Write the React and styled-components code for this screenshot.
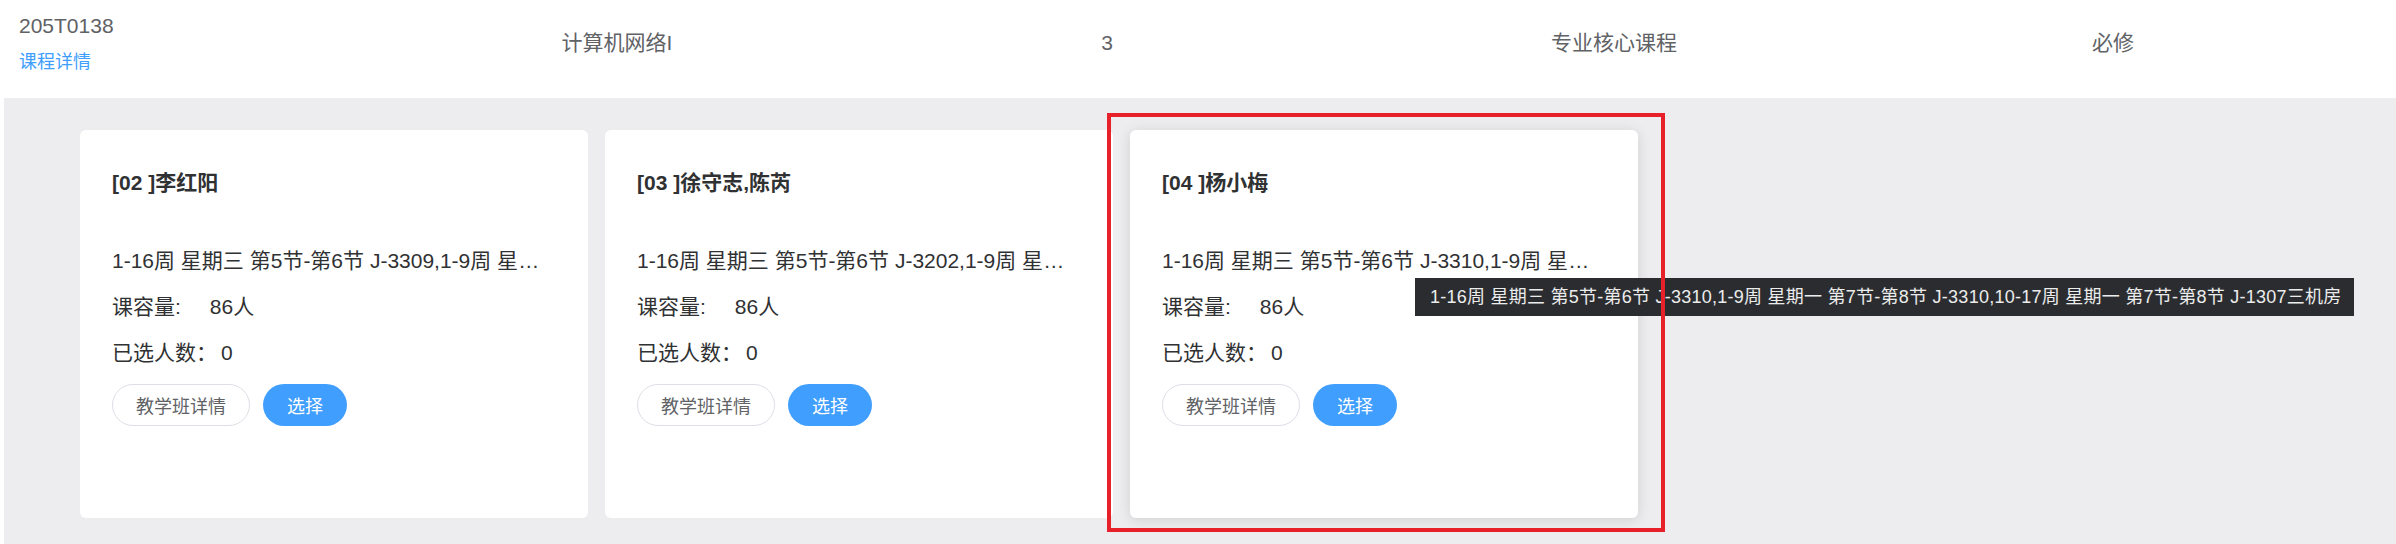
import React from 'react'
import styled, { createGlobalStyle } from 'styled-components'

const GlobalStyle = createGlobalStyle`
    body {
        margin: 0;
        background: #fff;
        font-family: "Liberation Sans", "Noto Sans CJK SC", sans-serif;
        color: #606266;
    }
`;

const classes = [
    {
        id: '02',
        teacher: '李红阳',
        schedule: '1-16周 星期三 第5节-第6节 J-3309,1-9周 星期一 第7节-第8节 J-3309,10-17周 星期一 第7节-第8节 J-1307三机房',
        capacity: 86,
        chosen: 0,
    },
    {
        id: '03',
        teacher: '徐守志,陈芮',
        schedule: '1-16周 星期三 第5节-第6节 J-3202,1-9周 星期一 第7节-第8节 J-3202,10-17周 星期一 第7节-第8节 J-1307三机房',
        capacity: 86,
        chosen: 0,
    },
    {
        id: '04',
        teacher: '杨小梅',
        schedule: '1-16周 星期三 第5节-第6节 J-3310,1-9周 星期一 第7节-第8节 J-3310,10-17周 星期一 第7节-第8节 J-1307三机房',
        capacity: 86,
        chosen: 0,
        hovered: true,
    },
]

function App() {
    return (
        <Page>
            <GlobalStyle />
            <CourseRow>
                <CodeCell>
                    <Code>205T0138</Code>
                    <DetailLink>课程详情</DetailLink>
                </CodeCell>
                <Cell>计算机网络I</Cell>
                <Cell>3</Cell>
                <Cell>专业核心课程</Cell>
                <Cell>必修</Cell>
            </CourseRow>

            <ClassPanel>
                {classes.map((c) => (
                    <ClassCard key={c.id} $active={c.hovered}>
                        <Title>[{c.id} ]{c.teacher}</Title>
                        <InfoLine>{c.schedule}</InfoLine>
                        <InfoLine>课容量:<Value $gap={29}>{c.capacity}人</Value></InfoLine>
                        <InfoLine>已选人数：<Value $gap={4}>{c.chosen}</Value></InfoLine>
                        <Actions>
                            <Button>教学班详情</Button>
                            <Button $primary>选择</Button>
                        </Actions>
                        {c.hovered && (
                            <>
                                <Tooltip>{c.schedule}</Tooltip>
                                <Highlight />
                            </>
                        )}
                    </ClassCard>
                ))}
            </ClassPanel>
        </Page>
    )
}

const Page = styled.div`
    width: 2396px;
    min-height: 544px;
    overflow: hidden;
`;

const CourseRow = styled.div`
    display: grid;
    grid-template-columns: 368px 498px 482px 532px 466px;
    height: 98px;
    box-sizing: border-box;
    padding-top: 13px;
    font-size: 21px;
    color: #606266;
`;

const CodeCell = styled.div`
    padding-left: 19px;
    display: flex;
    flex-direction: column;
    gap: 10px;
`;

const Code = styled.div`
    line-height: 26px;
`;

const DetailLink = styled.a`
    font-size: 18px;
    line-height: 26px;
    color: #409eff;
    cursor: pointer;
`;

const Cell = styled.div`
    padding-top: 17px;
    line-height: 26px;
    text-align: center;
`;

const ClassPanel = styled.div`
    margin-left: 4px;
    background: #ededef;
    padding: 32px 76px 40px;
    display: flex;
    gap: 17px;
`;

const ClassCard = styled.div`
    position: relative;
    width: 508px;
    height: 388px;
    box-sizing: border-box;
    padding: 38px 40px 0 32px;
    background: #fff;
    border-radius: 6px;
    color: #303133;
    box-shadow: ${(p) => (p.$active ? '0 2px 14px rgba(0, 0, 0, 0.12)' : 'none')};
`;

const Title = styled.div`
    font-size: 21px;
    font-weight: 700;
    line-height: 30px;
    margin-bottom: 48px;
`;

const InfoLine = styled.div`
    font-size: 21px;
    line-height: 30px;
    margin-bottom: 16px;
    white-space: nowrap;
    overflow: hidden;
    text-overflow: ellipsis;
`;

const Value = styled.span`
    margin-left: ${(p) => p.$gap}px;
`;

const Actions = styled.div`
    display: flex;
    gap: 13px;
`;

const Button = styled.button`
    height: 42px;
    padding: 0 ${(p) => (p.$primary ? '24px' : '23px')};
    border-radius: 21px;
    border: ${(p) => (p.$primary ? 'none' : '1px solid #dcdfe6')};
    background: ${(p) => (p.$primary ? '#409eff' : '#fff')};
    color: ${(p) => (p.$primary ? '#fff' : '#606266')};
    font-family: inherit;
    font-size: 18px;
    cursor: pointer;
`;

const Tooltip = styled.div`
    position: absolute;
    left: 285px;
    top: 148px;
    z-index: 2;
    height: 38px;
    line-height: 38px;
    padding: 0 12px 0 15px;
    background: #2b2c30;
    color: #ececec;
    font-size: 18px;
    letter-spacing: 0.25px;
    white-space: nowrap;
`;

const Highlight = styled.div`
    position: absolute;
    top: -17px;
    left: -23px;
    right: -27px;
    bottom: -14px;
    z-index: 3;
    border: 4px solid #e8202a;
    pointer-events: none;
`;

export default App
